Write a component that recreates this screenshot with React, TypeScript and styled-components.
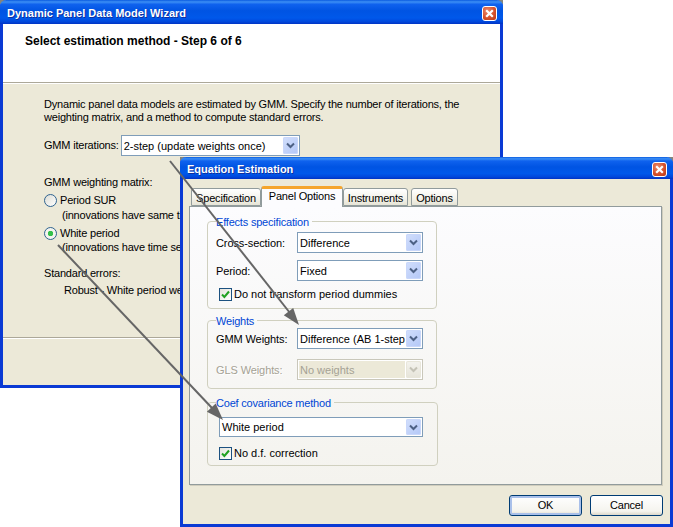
import React from 'react';
import styled, { createGlobalStyle } from 'styled-components';

const GlobalStyle = createGlobalStyle`
  html, body {
    margin: 0;
    background: #fff;
  }
  body {
    font-family: 'Liberation Sans', Tahoma, sans-serif;
    font-size: 11px;
    letter-spacing: -0.2px;
    line-height: 13px;
    color: #000;
  }
`;

const Desktop = styled.div`
  position: relative;
  width: 673px;
  height: 527px;
  overflow: hidden;
`;

const Win = styled.div<{ $x: number; $y: number; $w: number; $h: number }>`
  position: absolute;
  isolation: isolate;
  left: ${(p) => p.$x}px;
  top: ${(p) => p.$y}px;
  width: ${(p) => p.$w}px;
  height: ${(p) => p.$h}px;
  display: flex;
  flex-direction: column;
  box-sizing: border-box;
  background: #ece9d8;
  border: 3px solid #0a3ad4;
  border-top: 0;
  border-radius: 6px 6px 0 0;

  &::before,
  &::after {
    content: '';
    position: absolute;
    top: 0;
    width: 4px;
    height: 4px;
    background: #85857c;
    z-index: -1;
  }
  &::before {
    left: -3px;
  }
  &::after {
    right: -3px;
  }
`;

const TitleBar = styled.div<{ $h: number }>`
  flex: none;
  height: ${(p) => p.$h}px;
  box-sizing: border-box;
  margin: 0 -3px;
  padding: 2px 6px 0 7px;
  display: flex;
  align-items: center;
  justify-content: space-between;
  border-radius: 6px 6px 0 0;
  background: linear-gradient(
    180deg,
    #0a5be0 0%,
    #3c8ff5 8%,
    #0f62ee 18%,
    #0054e3 45%,
    #0058ea 75%,
    #0048dc 90%,
    #0033c4 100%
  );
`;

const TitleText = styled.span`
  color: #fff;
  font-weight: 700;
  font-size: 11px;
  letter-spacing: 0;
  text-shadow: 1px 1px 0 #0f2f9e;
`;

const CloseBox = styled.div`
  width: 15px;
  height: 15px;
  box-sizing: border-box;
  border: 1px solid #fff;
  border-radius: 3px;
  display: flex;
  align-items: center;
  justify-content: center;
  background: radial-gradient(circle at 35% 30%, #e98a6c, #d5512c 55%, #b93a17);
`;

const CloseButton = () => (
  <CloseBox>
    <svg width="9" height="9" viewBox="0 0 9 9">
      <path d="M1.2 1.2 L7.8 7.8 M7.8 1.2 L1.2 7.8" stroke="#fff" strokeWidth="2.2" fill="none" />
    </svg>
  </CloseBox>
);

const WizardHeader = styled.div`
  flex: none;
  height: 59px;
  box-sizing: border-box;
  padding: 11px 0 0 22px;
  background: #fff;
  border-bottom: 1px solid #aca899;
  font-weight: 700;
  font-size: 12px;
  letter-spacing: 0;
`;

const WizardBody = styled.div`
  flex: 1;
  padding: 14px 0 0 41px;
  display: flex;
  flex-direction: column;
  border-top: 1px solid #fff;
`;

const Line = styled.div<{ $mt?: number; $ml?: number }>`
  margin-top: ${(p) => p.$mt ?? 0}px;
  margin-left: ${(p) => p.$ml ?? 0}px;
  white-space: nowrap;
`;

const IterRow = styled.div`
  margin-top: 11px;
  display: flex;
  align-items: center;
  gap: 2px;
`;

const RadioRow = styled.div<{ $mt: number }>`
  margin-top: ${(p) => p.$mt}px;
  display: flex;
  align-items: center;
  gap: 3px;
  white-space: nowrap;
`;

const RadioDot = styled.span<{ $on?: boolean }>`
  width: 13px;
  height: 13px;
  box-sizing: border-box;
  border-radius: 50%;
  border: 1px solid #2f6390;
  background: ${(p) =>
    p.$on
      ? 'radial-gradient(circle, #35c04a 0 2.5px, #f4f4ee 3px)'
      : 'linear-gradient(135deg, #dcdcd4, #fff)'};
`;

const WizardFooter = styled.div`
  position: absolute;
  left: 0;
  right: 0;
  bottom: 0;
  height: 47px;
  background: #ece9d8;
  border-top: 1px solid #aca899;
  box-shadow: inset 0 1px 0 #fff;
`;

const TabStrip = styled.div`
  flex: none;
  margin: 7px 0 0 8px;
  height: 20px;
  display: flex;
  align-items: flex-end;
  position: relative;
  z-index: 1;
`;

const Tab = styled.div<{ $w: number; $active?: boolean; $ml?: number }>`
  width: ${(p) => p.$w}px;
  margin-left: ${(p) => p.$ml ?? 0}px;
  box-sizing: border-box;
  text-align: center;
  height: ${(p) => (p.$active ? 21 : 18)}px;
  margin-bottom: ${(p) => (p.$active ? -1 : 0)}px;
  padding-top: ${(p) => (p.$active ? 1 : 3)}px;
  background: ${(p) =>
    p.$active ? '#fcfcfe' : 'linear-gradient(180deg, #fff 0%, #f3f2ea 60%, #e6e4d6 100%)'};
  border: 1px solid #919b9c;
  border-bottom: ${(p) => (p.$active ? '0' : '1px solid #919b9c')};
  border-top: ${(p) => (p.$active ? '3px solid #f5a52d' : '1px solid #919b9c')};
  border-radius: 3px 3px 0 0;
`;

const Panel = styled.div`
  flex: none;
  width: 473px;
  height: 279px;
  margin-left: 6px;
  box-sizing: border-box;
  padding: 7px 0 0 17px;
  background: linear-gradient(180deg, #fcfcfe 0%, #f4f3ee 100%);
  border: 1px solid #919b9c;
  box-shadow: 1px 1px 0 #d0cdbd;
`;

const Group = styled.fieldset<{ $h: number; $mt?: number; $w?: number }>`
  margin: ${(p) => p.$mt ?? 0}px 0 0;
  padding: 0 0 0 8px;
  width: ${(p) => p.$w ?? 230}px;
  height: ${(p) => p.$h}px;
  box-sizing: border-box;
  border: 1px solid #d0d0bf;
  border-radius: 4px;
`;

const GroupTitle = styled.legend`
  padding: 2px 3px 0 0;
  color: #0046d5;
  line-height: 13px;
`;

const FormRow = styled.div<{ $mt?: number }>`
  margin-top: ${(p) => p.$mt ?? 0}px;
  display: grid;
  grid-template-columns: 81px 126px;
  align-items: center;
`;

const FieldLabel = styled.span<{ $muted?: boolean }>`
  padding-top: 2px;
  letter-spacing: -0.1px;
  color: ${(p) => (p.$muted ? '#a5a294' : '#000')};
  text-shadow: ${(p) => (p.$muted ? '1px 1px 0 #fff' : 'none')};
`;

const ComboBox = styled.div<{
  $w?: number;
  $ml?: number;
  $mt?: number;
  $muted?: boolean;
  $compact?: boolean;
}>`
  width: ${(p) => (p.$w ? `${p.$w}px` : 'auto')};
  margin-left: ${(p) => p.$ml ?? 0}px;
  margin-top: ${(p) => p.$mt ?? 0}px;
  height: ${(p) => (p.$compact ? 20 : 21)}px;
  box-sizing: border-box;
  display: flex;
  align-items: center;
  padding: 1px;
  background: #fff;
  border: 1px solid ${(p) => (p.$muted ? '#c9c7ba' : '#7f9db9')};
`;

const ComboText = styled.span<{ $muted?: boolean; $compact?: boolean }>`
  flex: 1;
  min-width: 0;
  height: ${(p) => (p.$compact ? 16 : 17)}px;
  padding-left: 1px;
  margin-right: 1px;
  line-height: ${(p) => (p.$compact ? 17 : 19)}px;
  letter-spacing: 0;
  overflow: hidden;
  white-space: nowrap;
  color: ${(p) => (p.$muted ? '#a5a294' : '#000')};
  background: ${(p) => (p.$muted ? '#ece9d8' : 'transparent')};
`;

const ComboArrow = styled.span<{ $muted?: boolean; $compact?: boolean }>`
  flex: none;
  width: 15px;
  height: ${(p) => (p.$compact ? 16 : 17)}px;
  display: flex;
  align-items: center;
  justify-content: center;
  border-radius: 2px;
  background: ${(p) =>
    p.$muted ? 'linear-gradient(180deg, #f4f3ee, #e6e4d9)' : 'linear-gradient(135deg, #d2dffc, #b3c7f7)'};
  box-shadow: inset 0 0 0 1px ${(p) => (p.$muted ? '#e8e6da' : '#c9d7fa')};
`;

type ComboProps = {
  value: string;
  w?: number;
  ml?: number;
  mt?: number;
  muted?: boolean;
  compact?: boolean;
};

const Combo = ({ value, w, ml, mt, muted, compact }: ComboProps) => (
  <ComboBox $w={w} $ml={ml} $mt={mt} $muted={muted} $compact={compact}>
    <ComboText $muted={muted} $compact={compact}>
      {value}
    </ComboText>
    <ComboArrow $muted={muted} $compact={compact}>
      <svg width="9" height="7" viewBox="0 0 9 7">
        <path
          d="M1 1.5 L4.5 5 L8 1.5"
          stroke={muted ? '#c4c2b6' : '#4d6185'}
          strokeWidth="2"
          fill="none"
        />
      </svg>
    </ComboArrow>
  </ComboBox>
);

const CheckRow = styled.div<{ $mt: number }>`
  margin: ${(p) => p.$mt}px 0 0 3px;
  display: flex;
  align-items: center;
  gap: 2px;
  letter-spacing: 0;
`;

const CheckBox = styled.span`
  width: 13px;
  height: 13px;
  box-sizing: border-box;
  border: 1px solid #1c5180;
  background: linear-gradient(135deg, #e4e3dc, #fff);
  display: flex;
  align-items: center;
  justify-content: center;
`;

const Check = ({ label, mt }: { label: string; mt: number }) => (
  <CheckRow $mt={mt}>
    <CheckBox>
      <svg width="9" height="9" viewBox="0 0 9 9">
        <path d="M1 4.5 L3.4 7 L8 1.5" stroke="#21a121" strokeWidth="2" fill="none" />
      </svg>
    </CheckBox>
    {label}
  </CheckRow>
);

const DialogButtons = styled.div`
  flex: none;
  margin-top: 10px;
  padding-right: 7px;
  display: flex;
  justify-content: flex-end;
  gap: 8px;
`;

const PushButton = styled.div<{ $default?: boolean }>`
  width: 73px;
  height: 21px;
  box-sizing: border-box;
  border: 1px solid #003c74;
  border-radius: 3px;
  text-align: center;
  line-height: 19px;
  background: linear-gradient(180deg, #fff 0%, #f5f4ee 80%, #dcd8ca 100%);
  box-shadow: ${(p) => (p.$default ? 'inset 0 0 0 2px #a9c0ea' : 'none')};
`;

const ArrowLayer = styled.svg`
  position: absolute;
  left: 0;
  top: 0;
  pointer-events: none;
`;

const App = () => (
  <Desktop>
    <GlobalStyle />
    <Win $x={0} $y={0} $w={503} $h={388}>
      <TitleBar $h={24}>
        <TitleText>Dynamic Panel Data Model Wizard</TitleText>
        <CloseButton />
      </TitleBar>
      <WizardHeader>Select estimation method - Step 6 of 6</WizardHeader>
      <WizardBody>
        <Line>
          Dynamic panel data models are estimated by GMM. Specify the number of iterations, the
          <br />
          weighting matrix, and a method to compute standard errors.
        </Line>
        <IterRow>
          GMM iterations:
          <Combo value="2-step (update weights once)" w={179} />
        </IterRow>
        <Line $mt={20}>GMM weighting matrix:</Line>
        <RadioRow $mt={5}>
          <RadioDot />
          Period SUR
        </RadioRow>
        <Line $mt={2} $ml={18}>
          (innovations have same time series correlation)
        </Line>
        <RadioRow $mt={5}>
          <RadioDot $on />
          White period
        </RadioRow>
        <Line $mt={1} $ml={18}>
          (innovations have time series correlation)
        </Line>
        <Line $mt={13}>Standard errors:</Line>
        <Line $mt={4} $ml={20}>
          Robust - White period weights
        </Line>
      </WizardBody>
      <WizardFooter />
    </Win>

    <Win $x={180} $y={157} $w={493} $h={370}>
      <TitleBar $h={22}>
        <TitleText>Equation Estimation</TitleText>
        <CloseButton />
      </TitleBar>
      <TabStrip>
        <Tab $w={70}>Specification</Tab>
        <Tab $w={82} $active>
          Panel Options
        </Tab>
        <Tab $w={65}>Instruments</Tab>
        <Tab $w={47} $ml={3}>
          Options
        </Tab>
      </TabStrip>
      <Panel>
        <Group $h={95}>
          <GroupTitle>Effects specification</GroupTitle>
          <FormRow $mt={3}>
            <FieldLabel>Cross-section:</FieldLabel>
            <Combo value="Difference" />
          </FormRow>
          <FormRow $mt={7}>
            <FieldLabel>Period:</FieldLabel>
            <Combo value="Fixed" />
          </FormRow>
          <Check label="Do not transform period dummies" mt={7} />
        </Group>
        <Group $h={76} $mt={4}>
          <GroupTitle>Weights</GroupTitle>
          <FormRow>
            <FieldLabel>GMM Weights:</FieldLabel>
            <Combo value="Difference (AB 1-step)" />
          </FormRow>
          <FormRow $mt={10}>
            <FieldLabel $muted>GLS Weights:</FieldLabel>
            <Combo value="No weights" muted />
          </FormRow>
        </Group>
        <Group $h={71} $mt={6} $w={231}>
          <GroupTitle>Coef covariance method</GroupTitle>
          <Combo value="White period" w={204} ml={3} mt={7} compact />
          <Check label="No d.f. correction" mt={10} />
        </Group>
      </Panel>
      <DialogButtons>
        <PushButton $default>OK</PushButton>
        <PushButton>Cancel</PushButton>
      </DialogButtons>
    </Win>

    <ArrowLayer width="673" height="527" viewBox="0 0 673 527">
      <path d="M170 161 L290 313" stroke="#666" strokeWidth="2" fill="none" />
      <polygon points="299,325 293.2,307.9 283.8,315.3" fill="#666" />
      <path d="M58 245 L212 408" stroke="#666" strokeWidth="2" fill="none" />
      <polygon points="223,420 215.7,403.5 206.9,411.7" fill="#666" />
    </ArrowLayer>
  </Desktop>
);

export default App;
